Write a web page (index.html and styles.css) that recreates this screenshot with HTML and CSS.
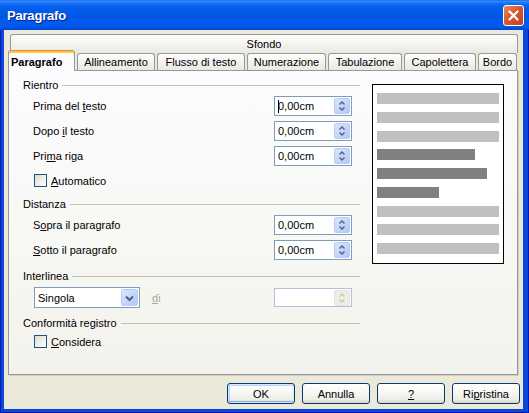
FILE: index.html
```html
<!DOCTYPE html>
<html>
<head>
<meta charset="utf-8">
<title>Paragrafo</title>
<link rel="stylesheet" href="styles.css">
</head>
<body>
<div class="window">
  <div class="titlebar">
    <span class="title">Paragrafo</span>
    <span class="close">
      <svg width="19" height="19" viewBox="0 0 19 19"><path d="M5.5 5.5 L13.5 13.5 M13.5 5.5 L5.5 13.5" stroke="#fff" stroke-width="2.2" stroke-linecap="round"/></svg>
    </span>
  </div>
  <div class="frame">
    <div class="client">
      <div class="tabs">
        <div class="tab-back-row"><div class="tab tab-back">Sfondo</div></div>
        <div class="tab-row">
          <div class="tab selected t1">Paragrafo</div>
          <div class="tab t2">Allineamento</div>
          <div class="tab t3">Flusso di testo</div>
          <div class="tab t4">Numerazione</div>
          <div class="tab t5">Tabulazione</div>
          <div class="tab t6">Capolettera</div>
          <div class="tab t7">Bordo</div>
        </div>
      </div>
      <div class="panel">
        <div class="form">
          <div class="group-head first"><span>Rientro</span></div>
          <div class="field">
            <span class="lbl">Prima del <u>t</u>esto</span>
            <div class="spin"><span class="val"><span class="caret"></span>0,00cm</span><span class="spinbtn"><svg width="14" height="14" viewBox="0 0 14 14"><path d="M4.5 5.5 L7 3 L9.5 5.5 M4.5 8.5 L7 11 L9.5 8.5" fill="none" stroke="#4D6185" stroke-width="1.4"/></svg></span></div>
          </div>
          <div class="field">
            <span class="lbl">Dopo <u>i</u>l testo</span>
            <div class="spin"><span class="val">0,00cm</span><span class="spinbtn"><svg width="14" height="14" viewBox="0 0 14 14"><path d="M4.5 5.5 L7 3 L9.5 5.5 M4.5 8.5 L7 11 L9.5 8.5" fill="none" stroke="#4D6185" stroke-width="1.4"/></svg></span></div>
          </div>
          <div class="field">
            <span class="lbl">Pri<u>m</u>a riga</span>
            <div class="spin"><span class="val">0,00cm</span><span class="spinbtn"><svg width="14" height="14" viewBox="0 0 14 14"><path d="M4.5 5.5 L7 3 L9.5 5.5 M4.5 8.5 L7 11 L9.5 8.5" fill="none" stroke="#4D6185" stroke-width="1.4"/></svg></span></div>
          </div>
          <div class="check-row r-auto">
            <span class="checkbox"></span><span class="lbl"><u>A</u>utomatico</span>
          </div>

          <div class="group-head g2"><span>Distanza</span></div>
          <div class="field">
            <span class="lbl">S<u>o</u>pra il paragrafo</span>
            <div class="spin"><span class="val">0,00cm</span><span class="spinbtn"><svg width="14" height="14" viewBox="0 0 14 14"><path d="M4.5 5.5 L7 3 L9.5 5.5 M4.5 8.5 L7 11 L9.5 8.5" fill="none" stroke="#4D6185" stroke-width="1.4"/></svg></span></div>
          </div>
          <div class="field">
            <span class="lbl"><u>S</u>otto il paragrafo</span>
            <div class="spin"><span class="val">0,00cm</span><span class="spinbtn"><svg width="14" height="14" viewBox="0 0 14 14"><path d="M4.5 5.5 L7 3 L9.5 5.5 M4.5 8.5 L7 11 L9.5 8.5" fill="none" stroke="#4D6185" stroke-width="1.4"/></svg></span></div>
          </div>

          <div class="group-head g3"><span>Interlinea</span></div>
          <div class="line-row">
            <div class="combo"><span class="val">Singola</span><span class="combobtn"><svg width="15" height="16" viewBox="0 0 15 16"><path d="M4 6.5 L7.5 10 L11 6.5" fill="none" stroke="#4D6185" stroke-width="2"/></svg></span></div>
            <span class="di"><u>d</u>i</span>
            <div class="spin disabled"><span class="val"></span><span class="spinbtn"><svg width="14" height="14" viewBox="0 0 14 14"><path d="M4.5 5.5 L7 3 L9.5 5.5 M4.5 8.5 L7 11 L9.5 8.5" fill="none" stroke="#C9C7BA" stroke-width="1.4"/></svg></span></div>
          </div>

          <div class="group-head g4"><span>Conformità registro</span></div>
          <div class="check-row r-cons">
            <span class="checkbox"></span><span class="lbl"><u>C</u>onsidera</span>
          </div>
        </div>
        <div class="preview">
          <div class="bar"></div>
          <div class="bar"></div>
          <div class="bar"></div>
          <div class="bar dark b4"></div>
          <div class="bar dark b5"></div>
          <div class="bar dark b6"></div>
          <div class="bar"></div>
          <div class="bar"></div>
          <div class="bar"></div>
        </div>
      </div>
      <div class="buttons">
        <div class="btn default">OK</div>
        <div class="btn">Annulla</div>
        <div class="btn"><u>?</u></div>
        <div class="btn">Ri<u>p</u>ristina</div>
      </div>
    </div>
  </div>
</div>
</body>
</html>
```
FILE: styles.css
```css
* { box-sizing: border-box; margin: 0; padding: 0; }
html, body { width: 529px; height: 413px; overflow: hidden; }
body {
  font-family: "Liberation Sans", Arial, sans-serif;
  font-size: 11px;
  color: #000;
  background: #fff;
}
u { text-decoration: underline; text-underline-offset: 1px; }

.window {
  width: 529px;
  height: 413px;
  display: flex;
  flex-direction: column;
}

.titlebar {
  height: 30px;
  flex: none;
  display: flex;
  align-items: center;
  justify-content: space-between;
  padding: 1px 5px 0 7px;
  background: linear-gradient(to bottom,
    #0A5DE8 0px, #3C8EFB 1px, #1A74F8 3px, #0560EE 6px,
    #0055E5 16px, #005BEF 24px, #0058E9 27px, #0046CF 30px);
}
.title {
  color: #fff;
  font-weight: bold;
  font-size: 13px;
  letter-spacing: -0.2px;
  text-shadow: 1px 1px 0 #0A1E8A;
}
.close {
  width: 21px;
  height: 21px;
  border: 1px solid #fff;
  border-radius: 3px;
  background: linear-gradient(135deg, #E88A66 0%, #D9582F 45%, #C4401D 100%);
  display: flex;
  align-items: center;
  justify-content: center;
  margin-top: -1px;
}

.frame {
  flex: 1;
  display: flex;
  padding: 0 6px 4px 4px;
  background: #0A48DC;
  box-shadow: inset 1px 0 #0019B0, inset -1px 0 #0019B0, inset 0 -1px #0019B0;
}
.client {
  flex: 1;
  background: #ECE9D8;
  display: flex;
  flex-direction: column;
  padding: 4px 0 0 4px;
}

/* tabs */
.tabs { width: 510px; }
.tab-back-row { padding-left: 2px; }
.tab {
  border: 1px solid #919B9C;
  border-bottom: none;
  border-radius: 3px 3px 0 0;
  background: linear-gradient(to bottom, #FEFEFE 0%, #F4F3EF 50%, #E9E8E2 100%);
  text-align: center;
  line-height: 14px;
  padding-top: 1px;
  white-space: nowrap;
}
.tab-back {
  width: 508px;
  height: 19px;
  padding-top: 2px;
}
.tab-row {
  height: 17px;
  display: flex;
  align-items: flex-end;
  gap: 2px;
}
.tab-row .tab { height: 17px; }
.tab-row .tab.selected {
  height: 21px;
  margin-bottom: -1px;
  position: relative;
  z-index: 1;
  background: #FCFCFE;
  border-top: 1px solid #E68B2C;
  box-shadow: inset 0 2px 0 #FFC73C;
  padding-top: 4px;
  padding-left: 2px;
  text-align: left;
  font-weight: bold;
}
.t1 { width: 67px; }
.t2 { width: 78px; }
.t3 { width: 88px; }
.t4 { width: 79px; }
.t5 { width: 74px; }
.t6 { width: 72px; }
.t7 { width: 39px; }

/* panel */
.panel {
  width: 510px;
  height: 305px;
  border: 1px solid #919B9C;
  background: linear-gradient(to bottom, #FCFCFE 0%, #F7F7F3 60%, #F3F2EC 100%);
  display: flex;
  align-items: flex-start;
  padding: 7px 0 0 14px;
  box-shadow: 1px 1px 0 #D0CEC1;
}
.form {
  width: 337px;
  display: flex;
  flex-direction: column;
}
.group-head {
  height: 14px;
  display: flex;
  align-items: center;
  line-height: 14px;
}
.group-head::after {
  content: "";
  flex: 1;
  height: 1px;
  background: #C2C0B3;
  margin-left: 4px;
}
.g2 { margin-top: 9px; }
.g3 { margin-top: 9px; }
.g4 { margin-top: 8px; }

.field {
  height: 20px;
  margin-top: 4px;
  display: flex;
  align-items: center;
  padding: 0 8px 0 10px;
}
.field + .field { margin-top: 5px; }
.field .lbl { flex: 1; }

.spin {
  width: 78px;
  height: 20px;
  border: 1px solid #7F9DB9;
  background: #fff;
  display: flex;
  align-items: center;
  padding: 1px;
}
.spin .val {
  flex: 1;
  padding-left: 2px;
  line-height: 14px;
  display: flex;
  align-items: center;
}
.caret {
  width: 1px;
  height: 13px;
  background: #000;
  margin-right: -1px;
}
.spinbtn {
  width: 16px;
  height: 16px;
  border: 1px solid #B9CCF6;
  border-radius: 2px;
  background: linear-gradient(135deg, #DCE6FD 0%, #C6D6FB 50%, #B4C8F6 100%);
  display: flex;
  align-items: center;
  justify-content: center;
}
.spin.disabled {
  height: 19px;
  border-color: #B3C1D8;
}
.spin.disabled .spinbtn {
  border-color: #E6E4DA;
  background: #EEEDE6;
}

.check-row {
  height: 15px;
  display: flex;
  align-items: center;
  padding-left: 11px;
}
.r-auto { margin-top: 7px; }
.r-cons { margin-top: 4px; }
.checkbox {
  width: 13px;
  height: 13px;
  border: 1px solid #1C5180;
  background: linear-gradient(135deg, #DCDCD7 0%, #F4F4F1 70%, #FFFFFF 100%);
  margin-right: 4px;
}

.line-row {
  height: 21px;
  margin-top: 4px;
  display: flex;
  align-items: center;
  padding: 0 8px 0 11px;
}
.combo {
  width: 106px;
  height: 21px;
  border: 1px solid #7F9DB9;
  background: #fff;
  display: flex;
  align-items: center;
  padding: 1px;
}
.combo .val { flex: 1; padding-left: 2px; }
.combobtn {
  width: 17px;
  height: 17px;
  border: 1px solid #B9CCF6;
  border-radius: 2px;
  background: linear-gradient(135deg, #DCE6FD 0%, #C6D6FB 50%, #B4C8F6 100%);
  display: flex;
  align-items: center;
  justify-content: center;
}
.di {
  color: #ACA899;
  margin-left: 12px;
  flex: 1;
}

/* preview */
.preview {
  width: 132px;
  height: 180px;
  margin: 6px 0 0 12px;
  border: 1px solid #000;
  background: #fff;
  display: flex;
  flex-direction: column;
  gap: 7.75px;
  padding: 8px 0 0 4px;
}
.bar {
  width: 122px;
  height: 11px;
  background: #C0C0C0;
}
.bar.dark { background: #808080; }
.b4 { width: 98px; }
.b5 { width: 110px; }
.b6 { width: 62px; }

/* buttons */
.buttons {
  margin-top: 8px;
  height: 21px;
  display: flex;
  justify-content: flex-end;
  gap: 7px;
  padding-right: 3px;
}
.btn {
  width: 68px;
  height: 21px;
  border: 1px solid #003C74;
  border-radius: 3px;
  background: linear-gradient(to bottom, #FFFFFF 0%, #F8F8F5 40%, #EEEDE7 80%, #D8D4C8 100%);
  display: flex;
  align-items: center;
  justify-content: center;
  line-height: 14px;
}
.btn.default {
  box-shadow: inset 0 0 0 1px #CEE7FF, inset 0 -1px 0 1px #89ADE4, inset 1px 1px 0 1px #BCD4F6;
}
```
